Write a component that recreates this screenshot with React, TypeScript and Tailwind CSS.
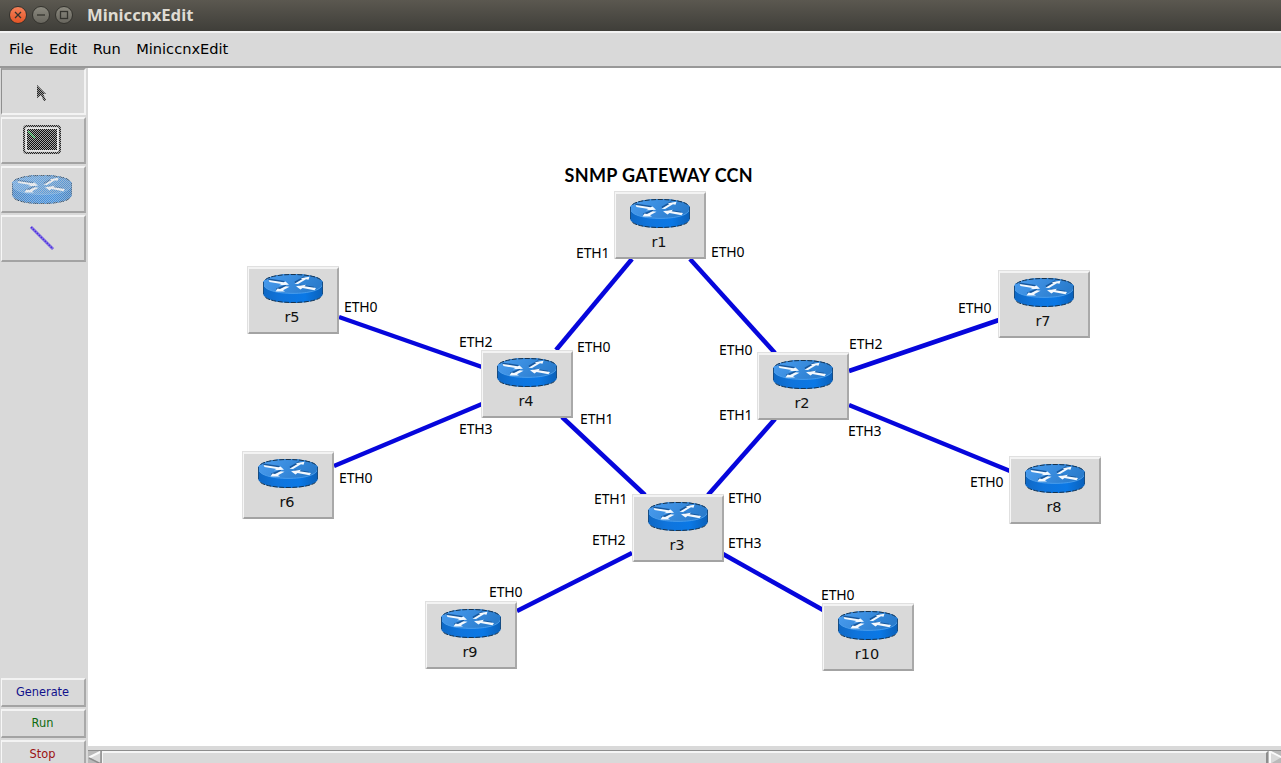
import React from "react";

type Point = { x: number; y: number };

const nodes: (Point & { name: string })[] = [
  { name: "r1", x: 614, y: 191 },
  { name: "r2", x: 757, y: 352 },
  { name: "r3", x: 632, y: 494 },
  { name: "r4", x: 481, y: 350 },
  { name: "r5", x: 247, y: 266 },
  { name: "r6", x: 242, y: 451 },
  { name: "r7", x: 998, y: 270 },
  { name: "r8", x: 1009, y: 456 },
  { name: "r9", x: 425, y: 601 },
  { name: "r10", x: 822, y: 603 },
];

const links: [number, number, number, number][] = [
  [632, 259, 556, 350],
  [690, 259, 775, 353],
  [339, 317, 482, 367],
  [334, 466, 482, 404],
  [562, 417, 645, 495],
  [775, 419, 708, 495],
  [849, 371, 999, 320],
  [849, 405, 1010, 471],
  [632, 553, 517, 611],
  [723, 554, 823, 610],
];

const ports: (Point & { text: string })[] = [
  { text: "ETH1", x: 576, y: 253 },
  { text: "ETH0", x: 711, y: 252 },
  { text: "ETH0", x: 344, y: 307 },
  { text: "ETH2", x: 459, y: 342 },
  { text: "ETH0", x: 577, y: 347 },
  { text: "ETH0", x: 719, y: 350 },
  { text: "ETH2", x: 849, y: 344 },
  { text: "ETH0", x: 958, y: 308 },
  { text: "ETH1", x: 580, y: 419 },
  { text: "ETH1", x: 719, y: 415 },
  { text: "ETH3", x: 459, y: 429 },
  { text: "ETH3", x: 848, y: 431 },
  { text: "ETH0", x: 339, y: 478 },
  { text: "ETH0", x: 970, y: 482 },
  { text: "ETH1", x: 594, y: 499 },
  { text: "ETH0", x: 728, y: 498 },
  { text: "ETH2", x: 592, y: 540 },
  { text: "ETH3", x: 728, y: 543 },
  { text: "ETH0", x: 489, y: 592 },
  { text: "ETH0", x: 821, y: 595 },
];

const raised =
  "border-t-2 border-l border-r-2 border-b-2 border-t-[#f3f3f3] border-l-[#f7f7f7] border-r-[#a9a9a9] border-b-[#a3a3a3] bg-[#d9d9d9]";
const sunken =
  "border-t-2 border-l border-r-2 border-b-2 border-t-[#a3a3a3] border-l-[#8f8f8f] border-r-[#f3f3f3] border-b-[#f3f3f3] bg-[#d9d9d9]";

function RouterIcon({ faded = false }: { faded?: boolean }) {
  return (
    <svg width="60" height="29" viewBox="0 0 60 29" className="block shrink-0">
      <defs>
        <linearGradient id="side" x1="0" x2="1" y1="0" y2="0">
          <stop offset="0" stopColor="#0f68c4" />
          <stop offset="0.3" stopColor="#0f74dc" />
          <stop offset="0.7" stopColor="#0a78e6" />
          <stop offset="1" stopColor="#0b60b8" />
        </linearGradient>
        <linearGradient id="top" x1="0" x2="1" y1="0" y2="0.3">
          <stop offset="0" stopColor="#4a9df0" />
          <stop offset="1" stopColor="#2a7ccd" />
        </linearGradient>
        <pattern id="dots" width="2" height="2" patternUnits="userSpaceOnUse">
          <rect width="1" height="1" fill="#d9d9d9" />
          <rect x="1" y="1" width="1" height="1" fill="#d9d9d9" />
        </pattern>
      </defs>
      <path
        d="M0 9.500 C0 3.500 13 0 30 0 S60 3.500 60 9.500 V19 C60 25 47 29 30 29 S0 25 0 19 Z"
        fill="url(#side)"
      />
      <path d="M0 9.500 C0 3.500 13 0 30 0 S60 3.500 60 9.500 S47 19.200 30 19.200 S0 15.500 0 9.500 Z" fill="url(#top)" />
      <path d="M0.800 11 C2 16 14 19.400 30 19.400 S58 16 59.200 11" fill="none" stroke="#54a4ef" strokeWidth="0.800" />
      <path
        d="M2.500 5.500 C7 2.200 18 0.500 30 0.500 S53 2.200 57.500 5.500 M2.500 23.500 C7 26.800 18 28.500 30 28.500 S53 26.800 57.500 23.500"
        fill="none"
        stroke="#16334f"
        strokeWidth="1"
        strokeDasharray="5 1.500"
      />
      <path d="M0.500 8 V20 M59.500 8 V20" stroke="#174d83" strokeWidth="1" />
      <g fill="none" stroke="#17579c" strokeWidth="2" transform="translate(-0.500 -1.300)">
        <path d="M6 6.800 L22 9.300" />
        <path d="M32.500 10 L42 4.300" />
        <path d="M14 16.700 L23.500 13" />
        <path d="M37 12.700 L51.500 15" />
      </g>
      <g fill="#f4f9fe">
        <path d="M5.500 5.900 L20.500 8.300 L22.500 7.600 L26 10.700 L16 11.300 L18.500 10 L6.500 8.100 Z" />
        <path d="M31.500 9.800 L39.500 5 L37.500 4.200 L46.500 2.700 L45.500 5.700 L43 5.200 L35 10 Z" />
        <path d="M12.500 17.600 L14.500 14.600 L17 14.900 L22.500 12.300 L26.500 12.700 L20 16.300 L22 17.400 Z" />
        <path d="M33 12.200 L43 10.800 L41.500 12.200 L53 14 L51.500 16.200 L39.500 14 L37.500 15.500 Z" />
      </g>
      {faded && (
        <>
          <path
            d="M0 9.500 C0 3.500 13 0 30 0 S60 3.500 60 9.500 V19 C60 25 47 29 30 29 S0 25 0 19 Z"
            fill="#d9d9d9"
            opacity="0.28"
          />
          <rect width="60" height="29" fill="url(#dots)" opacity="0.5" shapeRendering="crispEdges" />
        </>
      )}
    </svg>
  );
}

function HostIcon() {
  return (
    <svg width="38" height="29" viewBox="0 0 38 29" className="mb-[2px] block">
      <defs>
        <pattern id="hostdots" width="2" height="2" patternUnits="userSpaceOnUse">
          <rect width="1" height="1" fill="#d9d9d9" />
          <rect x="1" y="1" width="1" height="1" fill="#d9d9d9" />
        </pattern>
      </defs>
      <rect x="1" y="1" width="36" height="27" rx="3" fill="#cccccc" stroke="#222" strokeWidth="2" />
      <rect x="2.500" y="2.500" width="33" height="24" rx="1" fill="#ededed" />
      <rect x="4" y="4" width="30" height="21" fill="#101010" />
      <path d="M5 6 L12 13" stroke="#18a03c" strokeWidth="2" />
      <rect width="38" height="29" fill="url(#hostdots)" opacity="0.750" />
    </svg>
  );
}

function LinkIcon() {
  return (
    <svg width="26" height="26" viewBox="0 0 26 26" className="mb-[2px] block">
      <path d="M2 2 L24 24" stroke="#8272e0" strokeWidth="3" />
      <path d="M2 2 L24 24" stroke="#4a28e2" strokeWidth="1.400" strokeDasharray="1.400 1.400" />
    </svg>
  );
}

function PointerIcon() {
  return (
    <svg width="10" height="17" viewBox="0 0 10 17" className="mt-[3px] block">
      <defs>
        <pattern id="ptrdots" width="2" height="2" patternUnits="userSpaceOnUse">
          <rect width="1" height="1" fill="#222" />
          <rect x="1" y="1" width="1" height="1" fill="#222" />
        </pattern>
      </defs>
      <path d="M0 0 L9 9 H6 L9 15 L7 16 L4 10 L0 13 Z" fill="#999" />
      <path d="M0 0 L9 9 H6 L9 15 L7 16 L4 10 L0 13 Z" fill="url(#ptrdots)" />
    </svg>
  );
}

function Tool({ active = false, children }: { active?: boolean; children: React.ReactNode }) {
  return (
    <div className={`flex h-[47px] w-[85px] items-center justify-center pr-[2px] ${active ? sunken : raised}`}>
      {children}
    </div>
  );
}

function WindowButton({ close = false, children }: { close?: boolean; children: React.ReactNode }) {
  return (
    <div
      className={`flex size-[18px] items-center justify-center rounded-full border border-[#34332e] ${
        close ? "bg-linear-to-b from-[#f58159] to-[#e35424]" : "bg-linear-to-b from-[#8b897f] to-[#68665e]"
      }`}
    >
      <svg width="10" height="10" viewBox="0 0 10 10" fill="none" stroke="#34332e" strokeWidth="1.300">
        {children}
      </svg>
    </div>
  );
}

function Action({ color, children }: { color: string; children: string }) {
  return (
    <div className={`flex h-[29px] w-[85px] shrink-0 items-center justify-center pt-px pr-px text-[11.4px] ${raised} ${color}`}>
      {children}
    </div>
  );
}

export default function App() {
  return (
    <div className="relative flex h-[763px] w-[1281px] flex-col overflow-hidden bg-[#d9d9d9] font-['DejaVu_Sans',sans-serif] text-black">
      <header className="flex h-[31px] shrink-0 items-center bg-linear-to-b from-[#5b5850] to-[#3f3e39] pb-px pl-[9px]">
        <div className="flex gap-[5px]">
          <WindowButton close>
            <path d="M2 2 L8 8 M8 2 L2 8" />
          </WindowButton>
          <WindowButton>
            <path d="M1 5 H9" />
          </WindowButton>
          <WindowButton>
            <rect x="1.500" y="1.500" width="7" height="7" />
          </WindowButton>
        </div>
        <h1 className="ml-[14px] font-['Noto_Sans',sans-serif] text-[16.7px] font-bold text-[#dfdbd2]">MiniccnxEdit</h1>
      </header>
      <nav className="flex h-[37px] shrink-0 items-center gap-[15.5px] border-t-2 border-b-2 border-t-[#f3f3f3] border-b-[#989898] pb-[2px] pl-[9px] text-[14.6px]">
        <span>File</span>
        <span>Edit</span>
        <span>Run</span>
        <span>MiniccnxEdit</span>
      </nav>
      <div className="flex min-h-0 flex-1">
        <aside className="flex w-[88px] shrink-0 flex-col justify-between pl-px">
          <div className="flex flex-col gap-[2px]">
            <Tool active>
              <PointerIcon />
            </Tool>
            <Tool>
              <HostIcon />
            </Tool>
            <Tool>
              <RouterIcon faded />
            </Tool>
            <Tool>
              <LinkIcon />
            </Tool>
          </div>
          <div className="-mb-[6px] flex flex-col gap-[2px]">
            <Action color="text-[#11118c]">Generate</Action>
            <Action color="text-[#0f6b0f]">Run</Action>
            <Action color="text-[#9b1111]">Stop</Action>
          </div>
        </aside>
        <main className="flex flex-1 flex-col bg-white">
          <div className="flex-1" />
          <div className="flex h-[17px] flex-col border-t-[4px] border-[#d9d9d9]">
            <div className="flex flex-1 border-t border-[#8d8d8d] bg-[#b9b9b9]">
              <svg width="14" height="14" viewBox="0 0 14 14" className="shrink-0">
                <path d="M13 0 L1 6 L13 13 Z" fill="#d9d9d9" />
                <path d="M13 0.500 L1 6.500" stroke="#fafafa" strokeWidth="2" />
                <path d="M13 0 V13 L1 7" fill="none" stroke="#8d8d8d" strokeWidth="1.500" />
              </svg>
              <div className="h-[16px] flex-1 border-t-2 border-r-2 border-l border-t-[#f5f5f5] border-r-[#8d8d8d] border-l-[#f5f5f5] bg-[#d9d9d9]" />
              <svg width="13" height="14" viewBox="0 0 13 14" className="shrink-0">
                <path d="M2 0 L14 6 L2 13 Z" fill="#d9d9d9" />
                <path d="M2 13 V0.500 L14 6.500" fill="none" stroke="#fafafa" strokeWidth="2" />
              </svg>
            </div>
          </div>
        </main>
      </div>

      <svg width="1281" height="763" className="pointer-events-none absolute inset-0">
        {links.map(([x1, y1, x2, y2]) => (
          <line key={`${x1}-${y1}`} x1={x1} y1={y1} x2={x2} y2={y2} stroke="#0606dc" strokeWidth="4.500" />
        ))}
      </svg>
      {nodes.map((n) => (
        <div
          key={n.name}
          className="absolute h-[68px] w-[92px] border-t border-l border-[#e0e0e0]"
          style={{ left: n.x, top: n.y }}
        >
          <div className={`flex h-full flex-col items-center pt-[5px] ${raised}`}>
            <RouterIcon />
            <span className="mt-[6px] -ml-[2px] text-[14.5px] leading-[17px] text-[#111]">{n.name}</span>
          </div>
        </div>
      ))}
      {ports.map((p) => (
        <span
          key={`${p.x}-${p.y}`}
          className="absolute -translate-y-1/2 font-['Noto_Sans',sans-serif] text-[14px] leading-[18px] tracking-[-0.15px]"
          style={{ left: p.x, top: p.y }}
        >
          {p.text}
        </span>
      ))}
      <h2 className="absolute top-[164px] left-[564.5px] font-['Lato',sans-serif] text-[18px] leading-[22px] font-bold tracking-[0.35px] whitespace-nowrap">
        SNMP GATEWAY CCN
      </h2>
    </div>
  );
}
